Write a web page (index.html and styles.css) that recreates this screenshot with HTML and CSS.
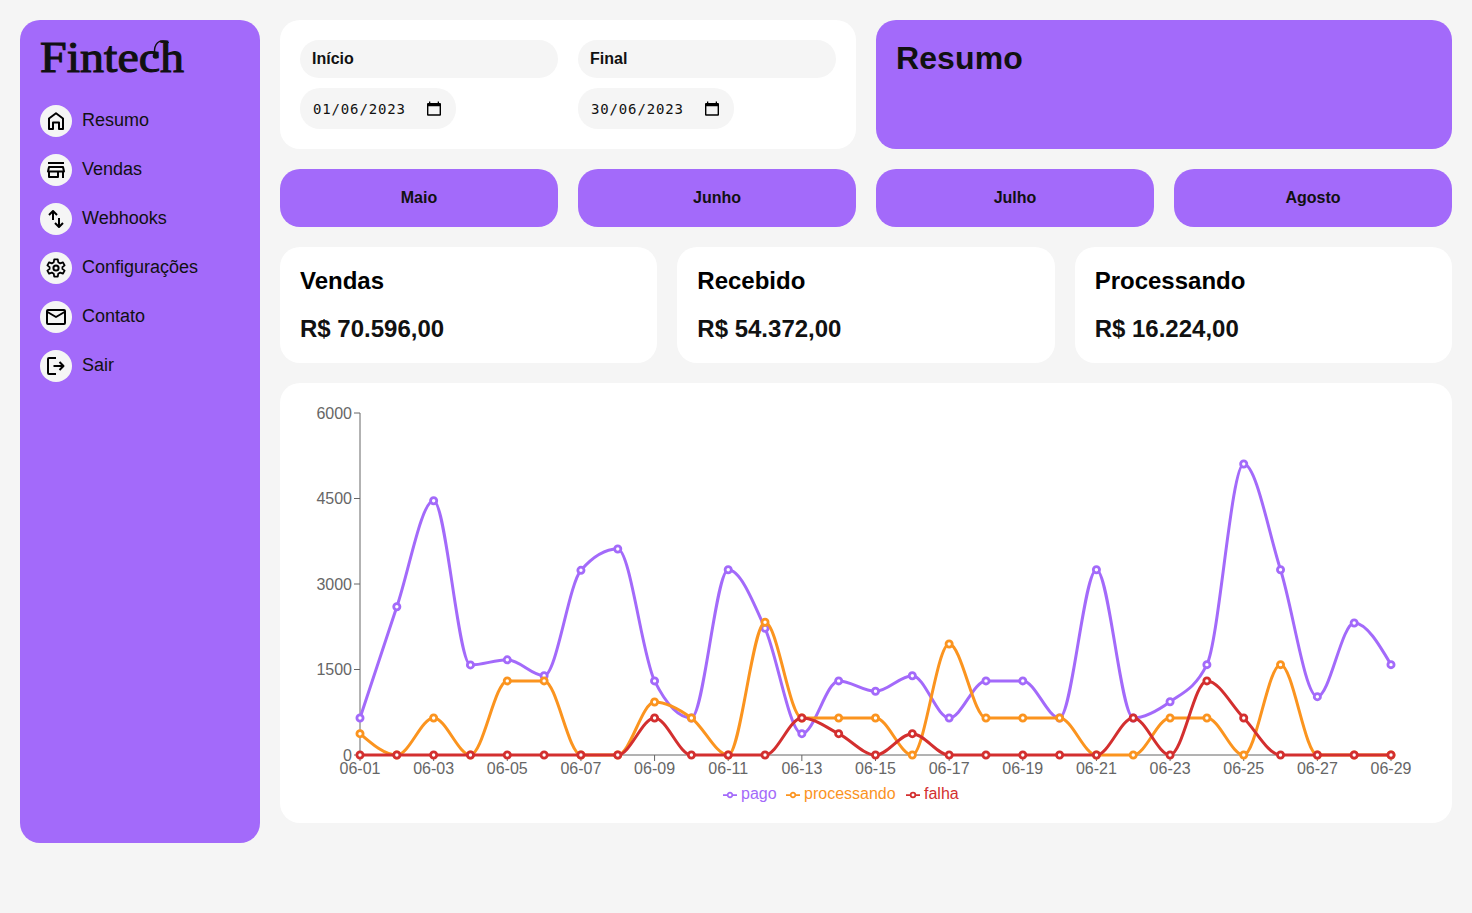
FILE: index.html
```html
<!DOCTYPE html>
<html lang="pt-BR">
<head>
<meta charset="utf-8">
<title>Fintech | Resumo</title>
<link rel="stylesheet" href="styles.css">
</head>
<body>
<div class="container">
  <nav class="sidenav box bg-purple">
    <svg class="logo" width="146" height="36" viewBox="0 0 146 36" role="img" aria-label="Fintech">
      <text class="logo-text" x="0" y="31.500" textLength="144" lengthAdjust="spacingAndGlyphs">Fintech</text>
      <circle cx="115.500" cy="16" r="2.800"/>
      <path class="logo-swash" d="M114.800 15.500C113.300 6 117 .9 123 .9C126 .9 127.500 1.500 128.500 3"/>
    </svg>
    <ul class="menu">
      <li><span class="icon"><svg viewBox="0 0 24 24"><path d="M5 20V9.500L12 4.300l7 5.200V20H15V13.500H9V20Z"/></svg></span><a>Resumo</a></li>
      <li><span class="icon"><svg viewBox="0 0 24 24"><path d="M4 5h16M4 13.500 5 9h14l1 4.500ZM5 13.500V19h9V13.500M19 13.500V20"/></svg></span><a>Vendas</a></li>
      <li><span class="icon"><svg viewBox="0 0 24 24"><path d="M9 13V4M5 8l4-4 4 4M15 11v9M11 16l4 4 4-4"/></svg></span><a>Webhooks</a></li>
      <li><span class="icon"><svg viewBox="0 0 24 24"><path transform="translate(1.320 1.320) scale(.89)" d="M10 2.200h4l.5 3.300 2.200 1.300 3-1.200 2 3.400-2.500 2v2l2.500 2-2 3.400-3-1.200-2.200 1.300-.5 3.300h-4l-.5-3.300-2.200-1.300-3 1.200-2-3.400 2.500-2v-2l-2.500-2 2-3.400 3 1.200 2.200-1.300Z"/><circle cx="12" cy="12" r="2.600"/></svg></span><a>Configurações</a></li>
      <li><span class="icon"><svg viewBox="0 0 24 24"><rect x="3" y="5" width="18" height="14" rx="1"/><path d="m3.500 7 8.500 5 8.500-5"/></svg></span><a>Contato</a></li>
      <li><span class="icon"><svg viewBox="0 0 24 24"><path d="M12 4H5a1 1 0 0 0-1 1v14a1 1 0 0 0 1 1h7M9.500 12H20M15.500 8l4 4-4 4"/></svg></span><a>Sair</a></li>
    </ul>
  </nav>
  <main>
    <header class="header">
      <form class="box bg-white range">
        <div>
          <label class="label">Início</label>
          <div class="date"><span>01/06/2023</span><svg width="14" height="15" viewBox="0 0 14 15"><path d="M2 .5h1.300v1.500h7.400V.5H12v1.500h1a1 1 0 0 1 1 1V13.700a1 1 0 0 1-1 1H1a1 1 0 0 1-1-1V3a1 1 0 0 1 1-1h1ZM1.400 5.200v8.100h11.200V5.200Z"/></svg></div>
        </div>
        <div>
          <label class="label">Final</label>
          <div class="date"><span>30/06/2023</span><svg width="14" height="15" viewBox="0 0 14 15"><path d="M2 .5h1.300v1.500h7.400V.5H12v1.500h1a1 1 0 0 1 1 1V13.700a1 1 0 0 1-1 1H1a1 1 0 0 1-1-1V3a1 1 0 0 1 1-1h1ZM1.400 5.200v8.100h11.200V5.200Z"/></svg></div>
        </div>
      </form>
      <h1 class="box bg-purple title">Resumo</h1>
    </header>
    <div class="months">
      <button>Maio</button><button>Junho</button><button>Julho</button><button>Agosto</button>
    </div>
    <section class="totals">
      <div class="box bg-white"><h2>Vendas</h2><span>R$ 70.596,00</span></div>
      <div class="box bg-white"><h2>Recebido</h2><span>R$ 54.372,00</span></div>
      <div class="box bg-white"><h2>Processando</h2><span>R$ 16.224,00</span></div>
    </section>
    <section class="box bg-white graph">
      <svg id="chart" width="1132" height="400"></svg>
    </section>
  </main>
</div>
<script src="chart.js"></script>
</body>
</html>
```
FILE: styles.css
```css
* { box-sizing: border-box; }
body, h1, h2, ul { margin: 0; padding: 0; }
body { background: #f5f5f5; color: #111; font-family: "Liberation Sans", Arial, sans-serif; font-size: 16px; }
.container { display: grid; grid-template-columns: 240px 1fr; gap: 20px; padding: 20px; align-items: start; }
.box { border-radius: 20px; padding: 20px; }
.bg-purple { background: #a36afa; }
.bg-white { background: #fff; }
.sidenav { height: 823px; }
.logo { display: block; overflow: visible; fill: #111; }
.logo-text { font: 44px "Liberation Serif", "Times New Roman", serif; stroke: #111; stroke-width: 1.1; }
.logo-swash { fill: none; stroke: #111; stroke-width: 1.4; }
.menu { list-style: none; margin-top: 29px; display: grid; gap: 17px; }
.menu li { display: flex; align-items: center; gap: 10px; height: 32px; font-size: 18px; line-height: 20px; }
.menu a { padding-bottom: 3px; }
.icon { width: 32px; height: 32px; border-radius: 50%; background: #f5f5f5; display: grid; place-items: center; }
.icon svg { width: 24px; height: 24px; fill: none; stroke: #000; stroke-width: 2; stroke-linejoin: round; }
main { display: grid; gap: 20px; }
.header { display: grid; grid-template-columns: 1fr 1fr; gap: 20px; height: 129px; }
.range { display: grid; grid-template-columns: 1fr 1fr; gap: 20px; }
.label { display: block; height: 38px; padding: 10px 12px; line-height: 18px; font-weight: bold; background: #f5f5f5; border-radius: 20px; margin-bottom: 10px; }
.date { display: flex; align-items: center; justify-content: space-between; width: 156px; height: 41px; padding: 0 15px 0 13px; background: #f5f5f5; border-radius: 20px; font: 14px "DejaVu Sans Mono", monospace; letter-spacing: .85px; }
.title { font-size: 32px; line-height: 36px; letter-spacing: .1px; }
.months { display: grid; grid-template-columns: repeat(4, 1fr); gap: 20px; }
.months button { height: 58px; border: 0; border-radius: 20px; background: #a36afa; color: #111; font: bold 16px "Liberation Sans", Arial, sans-serif; }
.totals { display: grid; grid-template-columns: repeat(3, 1fr); gap: 20px; }
.totals .box { height: 116px; font-size: 24px; font-weight: bold; line-height: 28px; }
.totals h2 { font-size: 24px; color: #000; margin-bottom: 20px; }
.totals span { display: block; }
.graph { height: 440px; }
#chart { display: block; font-size: 16px; }
.axis { stroke: #666; fill: none; }
.tick { fill: #666; }
.line { fill: none; stroke-width: 3; }
.dot { fill: #fff; stroke-width: 2.8; }
.legend-mark { fill: none; stroke-width: 1.75; }
```
FILE: chart.js
```js
const series = [
  { name: 'pago', color: '#a36afa', legend: 423, values: [650,2600,4460,1580,1670,1390,3240,3614,1300,650,3250,2223,374,1300,1118,1391,650,1300,1300,650,3250,650,935,1585,5105,3250,1023,2316,1585] },
  { name: 'processando', color: '#fb941f', legend: 486, values: [374,0,650,0,1300,1300,0,0,930,650,0,2328,650,650,650,0,1947,650,650,650,0,0,650,650,0,1585,0,0,0] },
  { name: 'falha', color: '#d32f2f', legend: 606, values: [0,0,0,0,0,0,0,0,650,0,0,0,650,374,0,374,0,0,0,0,0,650,0,1300,650,0,0,0,0] }
];
const left = 60, step = 1031 / 28, bottom = 352, scale = 342 / 6000;
const px = i => left + i * step;
const py = v => bottom - v * scale;

// Cubic interpolation that keeps each segment monotone in y.
function monotone(values) {
  const y = values.map(py), n = y.length;
  const d = y.slice(1).map((v, i) => (v - y[i]) / step);
  const m = y.map((_, i) => {
    if (i === 0 || i === n - 1) return 0;
    const a = d[i - 1], b = d[i];
    return (Math.sign(a) + Math.sign(b)) * Math.min(Math.abs(a), Math.abs(b), 0.25 * Math.abs(a + b)) || 0;
  });
  m[0] = (3 * d[0] - m[1]) / 2;
  m[n - 1] = (3 * d[n - 2] - m[n - 2]) / 2;
  let path = `M${px(0)},${y[0]}`;
  for (let i = 0; i < n - 1; i++) {
    path += `C${px(i) + step / 3},${y[i] + m[i] * step / 3},${px(i + 1) - step / 3},${y[i + 1] - m[i + 1] * step / 3},${px(i + 1)},${y[i + 1]}`;
  }
  return path;
}

let out = `<path class="axis" d="M60,10V352H1091"/>`;
for (let v = 0; v <= 6000; v += 1500) {
  out += `<path class="axis" d="M54,${py(v)}H60"/><text class="tick" x="52" y="${py(v) + 5.7}" text-anchor="end">${v}</text>`;
}
for (let i = 0; i < 29; i += 2) {
  out += `<path class="axis" d="M${px(i)},352V358"/><text class="tick" x="${px(i)}" y="371" text-anchor="middle">06-${String(i + 1).padStart(2, '0')}</text>`;
}
for (const s of series) {
  out += `<path class="line" stroke="${s.color}" d="${monotone(s.values)}"/>`;
  s.values.forEach((v, i) => { out += `<circle class="dot" stroke="${s.color}" cx="${px(i)}" cy="${py(v)}" r="3.1"/>`; });
}
for (const s of series) {
  const x = s.legend;
  out += `<path class="legend-mark" stroke="${s.color}" d="M${x},392H${x + 4.670}A2.330,2.330,0,1,1,${x + 9.330},392H${x + 14}M${x + 9.330},392A2.330,2.330,0,1,1,${x + 4.670},392"/><text x="${x + 18}" y="396" fill="${s.color}">${s.name}</text>`;
}
document.getElementById('chart').innerHTML = out;
```
